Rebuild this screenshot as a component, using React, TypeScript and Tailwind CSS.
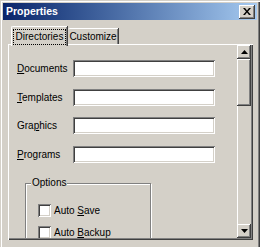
import React from "react";

const raised =
  "shadow-[inset_-1px_-1px_0_#404040,inset_1px_1px_0_#ffffff,inset_-2px_-2px_0_#808080]";
const sunken =
  "shadow-[inset_1px_1px_0_#808080,inset_-1px_-1px_0_#ffffff,inset_2px_2px_0_#404040,inset_-2px_-2px_0_#d4d0c8]";

function Label({ pre, u, post }: { pre?: string; u: string; post: string }) {
  return (
    <span className="w-[56px] shrink-0 text-black">
      {pre}
      <span className="underline underline-offset-[1px]">{u}</span>
      {post}
    </span>
  );
}

function Row({ label, mt }: { label: React.ReactNode; mt: string }) {
  return (
    <div className={`flex items-center ${mt}`}>
      {label}
      <div className={`w-[142px] h-[17px] bg-white ${sunken}`} />
    </div>
  );
}

function Check({ pre, u, post, mt }: { pre: string; u: string; post: string; mt: string }) {
  return (
    <div className={`flex items-center ${mt}`}>
      <div className={`w-[13px] h-[13px] bg-white ${sunken}`} />
      <span className="ml-[3px] text-black">
        {pre}
        <span className="underline underline-offset-[1px]">{u}</span>
        {post}
      </span>
    </div>
  );
}

function Arrow({ down }: { down?: boolean }) {
  return (
    <svg width="7" height="4" viewBox="0 0 7 4">
      {down ? (
        <polygon points="0,0 7,0 3.5,4" fill="#000" />
      ) : (
        <polygon points="0,4 7,4 3.5,0" fill="#000" />
      )}
    </svg>
  );
}

export default function App() {
  return (
    <div className="w-[260px] h-[247px] overflow-hidden bg-[#d4d0c8] font-['Liberation_Sans',Arial,sans-serif] text-[10px] leading-none">
      <div className="h-[247px] flex flex-col shadow-[inset_1px_1px_0_#d4d0c8,inset_2px_2px_0_#ffffff,inset_-1px_0_0_#404040,inset_-2px_0_0_#808080]">
        {/* Title bar */}
        <div className="mx-[3px] mt-[3px] h-[17px] flex items-center pl-[3px] pr-[2px] bg-gradient-to-r from-[#0a246a] to-[#a6caf0]">
          <span className="text-white font-bold text-[10.5px]">Properties</span>
          <div className={`ml-auto w-[16px] h-[14px] bg-[#d4d0c8] flex items-center justify-center ${raised}`}>
            <svg width="8" height="7" viewBox="0 0 8 7">
              <path d="M0 0h2l2 2.5L6 0h2L5 3.5 8 7H6L4 4.5 2 7H0l3-3.5z" fill="#000" />
            </svg>
          </div>
        </div>

        {/* Tabs */}
        <div className="ml-[8px] mt-[6px] flex items-end h-[18px] relative z-10">
          <div className="ml-[3px] w-[56px] h-[20px] -mb-[2px] bg-[#d4d0c8] border-l border-t border-white rounded-tl-[2px] shadow-[inset_-1px_0_0_#808080,1px_0_0_#404040] flex items-start justify-center pt-[2px]">
            <span className="px-[2px] py-[2px] border border-dotted border-black text-black">Directories</span>
          </div>
          <div className="ml-[1px] w-[50px] h-[16px] bg-[#d4d0c8] border-t border-white rounded-tl-[2px] shadow-[inset_-1px_0_0_#808080,1px_0_0_#404040] flex items-center justify-center">
            <span className="text-black">Customize</span>
          </div>
        </div>

        {/* Panel */}
        <div className="ml-[8px] w-[245px] h-[196px] flex border-t border-l border-white shadow-[inset_-1px_-1px_0_#404040,inset_-2px_-2px_0_#808080]">
          <div className="flex-1 h-[193px] overflow-hidden pl-[8px] pt-[15px]">
            <Row mt="" label={<Label u="D" post="ocuments" />} />
            <Row mt="mt-[12px]" label={<Label u="T" post="emplates" />} />
            <Row mt="mt-[11px]" label={<Label pre="Gra" u="p" post="hics" />} />
            <Row mt="mt-[12px]" label={<Label u="P" post="rograms" />} />

            <div className="relative ml-[8px] mt-[20px] w-[126px] h-[80px] border border-[#808080] shadow-[inset_1px_1px_0_#ffffff,1px_1px_0_#ffffff] pl-[12px] pt-[20px]">
              <span className="absolute -top-[6px] left-[5px] px-[1px] bg-[#d4d0c8] text-black">Options</span>
              <Check mt="" pre="Auto " u="S" post="ave" />
              <Check mt="mt-[9px]" pre="Auto " u="B" post="ackup" />
            </div>
          </div>

          {/* Scrollbar */}
          <div className="w-[14px] h-[193px] flex flex-col mr-[2px] bg-[#d4d0c8]">
            <div className={`h-[14px] flex items-center justify-center bg-[#d4d0c8] ${raised}`}>
              <Arrow />
            </div>
            <div className={`h-[47px] bg-[#d4d0c8] ${raised}`} />
            <div className="flex-1 bg-[#d4d0c8] shadow-[inset_1px_0_0_#ffffff]" />
            <div className={`h-[14px] flex items-center justify-center bg-[#d4d0c8] ${raised}`}>
              <Arrow down />
            </div>
          </div>
        </div>
      </div>
    </div>
  );
}
